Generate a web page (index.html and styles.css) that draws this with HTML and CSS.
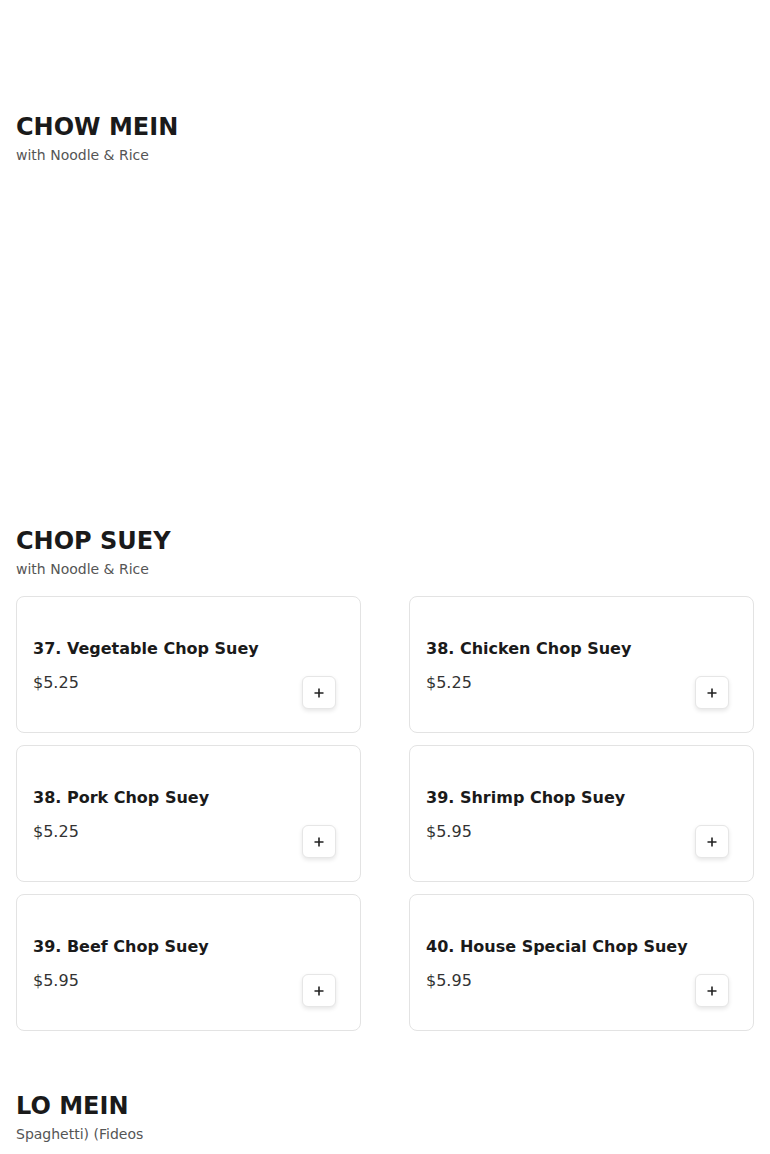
FILE: index.html
```html
<!DOCTYPE html>
<html lang="en">
<head>
    <meta charset="UTF-8">
    <meta name="viewport" content="width=device-width, initial-scale=1.0">
    <title>Menu</title>
    <link rel="stylesheet" href="styles.css">
</head>
<body>
    <div class="menu">
        <section class="section">
            <h2 class="section-title">CHOW MEIN</h2>
            <p class="section-sub">with Noodle &amp; Rice</p>
            <div class="items items-empty"></div>
        </section>

        <section class="section">
            <h2 class="section-title">CHOP SUEY</h2>
            <p class="section-sub">with Noodle &amp; Rice</p>
            <div class="items">
                <div class="item">
                    <div class="item-info">
                        <h3 class="item-name">37. Vegetable Chop Suey</h3>
                        <div class="item-price">$5.25</div>
                    </div>
                    <button class="add-btn"><svg width="12" height="12" viewBox="0 0 12 12"><path d="M6 1.5v9M1.5 6h9" stroke="#222" stroke-width="1.6"/></svg></button>
                </div>
                <div class="item">
                    <div class="item-info">
                        <h3 class="item-name">38. Chicken Chop Suey</h3>
                        <div class="item-price">$5.25</div>
                    </div>
                    <button class="add-btn"><svg width="12" height="12" viewBox="0 0 12 12"><path d="M6 1.5v9M1.5 6h9" stroke="#222" stroke-width="1.6"/></svg></button>
                </div>
                <div class="item">
                    <div class="item-info">
                        <h3 class="item-name">38. Pork Chop Suey</h3>
                        <div class="item-price">$5.25</div>
                    </div>
                    <button class="add-btn"><svg width="12" height="12" viewBox="0 0 12 12"><path d="M6 1.5v9M1.5 6h9" stroke="#222" stroke-width="1.6"/></svg></button>
                </div>
                <div class="item">
                    <div class="item-info">
                        <h3 class="item-name">39. Shrimp Chop Suey</h3>
                        <div class="item-price">$5.95</div>
                    </div>
                    <button class="add-btn"><svg width="12" height="12" viewBox="0 0 12 12"><path d="M6 1.5v9M1.5 6h9" stroke="#222" stroke-width="1.6"/></svg></button>
                </div>
                <div class="item">
                    <div class="item-info">
                        <h3 class="item-name">39. Beef Chop Suey</h3>
                        <div class="item-price">$5.95</div>
                    </div>
                    <button class="add-btn"><svg width="12" height="12" viewBox="0 0 12 12"><path d="M6 1.5v9M1.5 6h9" stroke="#222" stroke-width="1.6"/></svg></button>
                </div>
                <div class="item">
                    <div class="item-info">
                        <h3 class="item-name">40. House Special Chop Suey</h3>
                        <div class="item-price">$5.95</div>
                    </div>
                    <button class="add-btn"><svg width="12" height="12" viewBox="0 0 12 12"><path d="M6 1.5v9M1.5 6h9" stroke="#222" stroke-width="1.6"/></svg></button>
                </div>
            </div>
        </section>

        <section class="section">
            <h2 class="section-title">LO MEIN</h2>
            <p class="section-sub">Spaghetti) (Fideos</p>
        </section>
    </div>
</body>
</html>
```

FILE: styles.css
```css
body {
    font-family: "DejaVu Sans", sans-serif;
    margin: 0;
    background-color: #fff;
    color: #1a1a1a;
}
.menu {
    padding: 0 16px;
}
.section {
    padding-top: 113px;
}
.section + .section {
    padding-top: 61px;
}
.section-title {
    font-size: 24px;
    line-height: 28px;
    font-weight: bold;
    margin: 0;
    color: #1a1a1a;
}
.section-sub {
    font-size: 14px;
    line-height: 20px;
    margin: 4px 0 0;
    color: #555;
}
.items {
    display: grid;
    grid-template-columns: 1fr 1fr;
    column-gap: 48px;
    row-gap: 12px;
    margin-top: 17px;
}
.items-empty {
    height: 284px;
}
.item {
    display: flex;
    justify-content: space-between;
    align-items: flex-end;
    border: 1px solid #e3e3e3;
    border-radius: 8px;
    padding: 40px 24px 23px 16px;
    background: #fff;
}
.item-info {
    padding-bottom: 14px;
}
.item-name {
    font-size: 16px;
    line-height: 24px;
    font-weight: bold;
    margin: 0 0 10px;
    color: #1a1a1a;
}
.item-price {
    font-size: 16px;
    line-height: 24px;
    color: #333;
}
.add-btn {
    width: 34px;
    height: 33px;
    display: flex;
    align-items: center;
    justify-content: center;
    padding: 0;
    background: #fff;
    border: 1px solid #e6e6e6;
    border-radius: 6px;
    box-shadow: 0 2px 4px rgba(0,0,0,0.1);
    cursor: pointer;
}
```
